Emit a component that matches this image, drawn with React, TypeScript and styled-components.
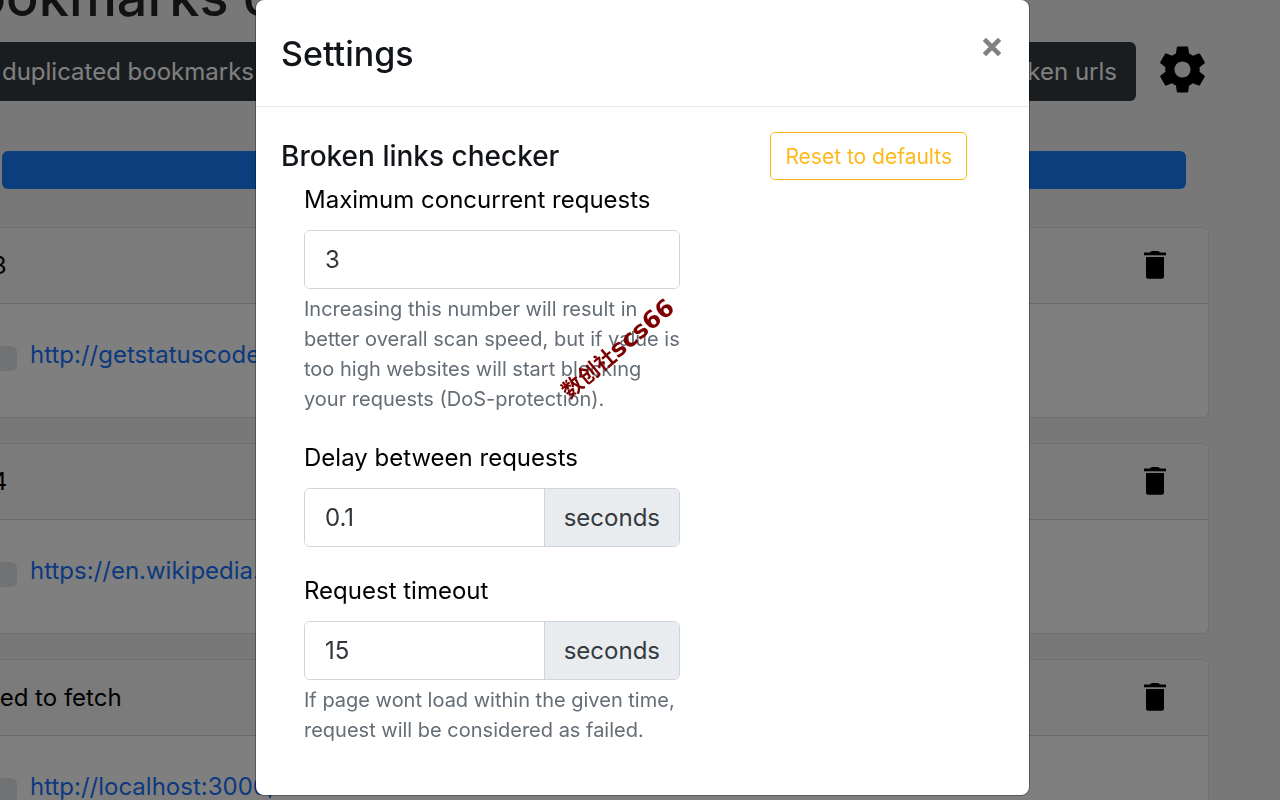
import React, { useState } from "react";
import styled, { createGlobalStyle } from "styled-components";

const GlobalStyle = createGlobalStyle`
  *, *::before, *::after { box-sizing: border-box; }
  html, body, #root { height: 100%; }
  body {
    margin: 0;
    overflow: hidden;
    background: #f0f0f0;
    color: #000;
    font-family: Inter, "Noto Sans CJK SC", sans-serif;
    font-size: 24px;
    line-height: 38px;
  }
  button, input { font: inherit; margin: 0; }
`;

const Viewport = styled.div`
  height: 100%;
  overflow: hidden;
`;

const Page = styled.main`
  margin: -35px 71px 0 -64px;
`;

const PageTitle = styled.h1`
  margin: 0 0 13px;
  padding-left: 2px;
  font-size: 54px;
  font-weight: 500;
  line-height: 64px;
  color: #212529;
`;

const Toolbar = styled.div`
  display: flex;
  align-items: center;
  gap: 19px;
`;

const ToolbarGroup = styled.div`
  display: flex;
  flex: 1;
  justify-content: space-between;
  height: 59px;
  border-radius: 6px;
  background: #343a40;
`;

const ToolbarButton = styled.button`
  padding: 0 19px 0 31px;
  border: 0;
  background: none;
  color: #fff;
`;

const IconButton = styled.button`
  display: flex;
  align-items: center;
  justify-content: center;
  padding: 0;
  border: 0;
  background: none;
  color: inherit;
`;

const SettingsButton = styled(IconButton)`
  height: 59px;
  padding-bottom: 4px;
  margin-right: -1px;
`;

const Progress = styled.div`
  height: 38px;
  margin: 50px 23px 38px 66px;
  border-radius: 6px;
  background: #187af8;
`;

const Card = styled.section`
  margin-bottom: 25px;
  border: 1px solid #dfdfdf;
  border-radius: 6px;
  background: #fff;
`;

const CardHeader = styled.header`
  display: flex;
  align-items: center;
  justify-content: space-between;
  height: 76px;
  padding: 0 42px 0 24px;
  border-bottom: 1px solid #d4d4d4;
  border-radius: 6px 6px 0 0;
  background: #f7f7f7;
`;

const CardTitle = styled.h2`
  margin: 0;
  font-size: 24px;
  font-weight: 400;
`;

const CardBody = styled.div`
  display: flex;
  align-items: flex-start;
  gap: 13px;
  height: 113px;
  padding: 32px 24px;
`;

const Badge = styled.span`
  width: 56px;
  height: 25px;
  margin-top: 10px;
  border-radius: 6px;
  background: #e2e5e8;
`;

const Link = styled.a`
  color: #1673fb;
  text-decoration: none;
`;

const Backdrop = styled.div`
  position: fixed;
  inset: 0;
  padding: 0 16px 4px 20%;
  background: rgba(0, 0, 0, 0.5);
`;

const Dialog = styled.div`
  max-width: 773px;
  border-radius: 8px;
  background: #fff;
  box-shadow: 0 0 0 1px rgba(0, 0, 0, 0.3);
`;

const DialogHeader = styled.header`
  display: flex;
  justify-content: space-between;
  align-items: flex-start;
  height: 107px;
  padding: 31px 25px;
  border-bottom: 1px solid #e6eaee;
`;

const DialogTitle = styled.h2`
  margin: 0;
  font-size: 34px;
  font-weight: 500;
  line-height: 46px;
  color: #111519;
`;

const CloseButton = styled(IconButton)`
  width: 24px;
  height: 32px;
  color: #808080;
`;

const DialogBody = styled.form`
  display: flex;
  align-items: flex-start;
  justify-content: space-between;
  padding: 25px 62px 50px 25px;
`;

const SectionTitle = styled.h3`
  margin: 0;
  font-size: 28px;
  font-weight: 500;
  line-height: 49px;
  color: #111519;
`;

const Fields = styled.div`
  display: flex;
  flex-direction: column;
  gap: 25px;
  width: 399px;
  padding-left: 23px;
`;

const Label = styled.label`
  display: block;
  margin-bottom: 11px;
`;

const InputGroup = styled.div`
  display: flex;
  height: 59px;
  border: 1px solid #ced4da;
  border-radius: 6px;
  overflow: hidden;
`;

const TextInput = styled.input`
  flex: 1;
  min-width: 0;
  padding: 0 20px;
  border: 0;
  background: #fff;
  color: #30363c;
  outline: none;
`;

const Unit = styled.span`
  display: flex;
  align-items: center;
  padding: 0 19px;
  border-left: 1px solid #ced4da;
  background: #e9ecef;
  color: #343a40;
`;

const Help = styled.p`
  margin: 5px 0 0;
  font-size: 20px;
  line-height: 30px;
  color: #646d75;
  white-space: pre-line;
`;

const ResetButton = styled.button`
  height: 48px;
  padding: 2px 14px 0;
  border: 1px solid #ffb81c;
  border-radius: 5px;
  background: #fff;
  color: #ffb81c;
  font-size: 21px;
`;

const Watermark = styled.div`
  position: fixed;
  left: 618px;
  top: 349px;
  display: flex;
  align-items: baseline;
  transform: translate(-50%, -50%) rotate(-40deg);
  color: #7d0000;
  font-family: "DejaVu Sans", "Noto Sans CJK SC", sans-serif;
  font-size: 21px;
  font-weight: 700;
  line-height: 24px;
  white-space: nowrap;
  pointer-events: none;
`;

const WatermarkCode = styled.span`
  font-size: 24px;
`;

const GearIcon = () => (
  <svg width="55" height="55" viewBox="0 0 24 24" fill="currentColor" aria-hidden="true">
    <path d="M19.43 12.98c.04-.32.07-.64.07-.98s-.03-.66-.07-.98l2.11-1.65c.19-.15.24-.42.12-.64l-2-3.46c-.12-.22-.39-.3-.61-.22l-2.49 1c-.52-.4-1.08-.73-1.69-.98l-.38-2.65C14.46 2.18 14.25 2 14 2h-4c-.25 0-.46.18-.49.42l-.38 2.65c-.61.25-1.17.59-1.69.98l-2.49-1c-.23-.09-.49 0-.61.22l-2 3.46c-.13.22-.07.49.12.64l2.11 1.65c-.04.32-.07.65-.07.98s.03.66.07.98l-2.11 1.65c-.19.15-.24.42-.12.64l2 3.46c.12.22.39.3.61.22l2.49-1c.52.4 1.08.73 1.69.98l.38 2.65c.03.24.24.42.49.42h4c.25 0 .46-.18.49-.42l.38-2.65c.61-.25 1.17-.59 1.69-.98l2.49 1c.23.09.49 0 .61-.22l2-3.46c.12-.22.07-.49-.12-.64l-2.11-1.65zM12 15.5c-1.93 0-3.5-1.57-3.5-3.5s1.57-3.5 3.5-3.5 3.5 1.57 3.5 3.5-1.57 3.5-3.5 3.5z" />
  </svg>
);

const TrashIcon = () => (
  <svg width="22" height="29" viewBox="0 0 22 29" fill="currentColor" aria-hidden="true">
    <path d="M0 2.2Q0 1.600 .6 1.600H5.4Q6.400 1.400 6.800 .7Q7.200 0 8 0H14Q14.800 0 15.200 .7Q15.600 1.400 16.600 1.600H21.400Q22 1.600 22 2.200V4.200H0Z" />
    <path d="M2 6H20V25.800Q20 27.800 18 27.800H4Q2 27.800 2 25.800Z" />
  </svg>
);

const CloseIcon = () => (
  <svg width="20" height="20" viewBox="0 0 20 20" fill="none" stroke="currentColor" strokeWidth="4.600" aria-hidden="true">
    <path d="M2.400 2.400L17.600 17.600M17.600 2.400L2.400 17.600" />
  </svg>
);

const results = [
  { title: "403", url: "http://getstatuscode.com/403" },
  { title: "404", url: "https://en.wikipedia.org/wiki/404" },
  { title: "Failed to fetch", url: "http://localhost:3000/" },
];

type FieldProps = {
  id: string;
  label: string;
  initial: string;
  unit?: string;
  help?: string;
};

function Field({ id, label, initial, unit, help }: FieldProps) {
  const [value, setValue] = useState(initial);
  return (
    <div>
      <Label htmlFor={id}>{label}</Label>
      <InputGroup>
        <TextInput id={id} value={value} onChange={(e) => setValue(e.target.value)} />
        {unit && <Unit>{unit}</Unit>}
      </InputGroup>
      {help && <Help>{help}</Help>}
    </div>
  );
}

export default function App() {
  return (
    <Viewport>
      <GlobalStyle />
      <Page>
        <PageTitle>Bookmarks cleaner</PageTitle>
        <Toolbar>
          <ToolbarGroup>
            <ToolbarButton>All duplicated bookmarks</ToolbarButton>
            <ToolbarButton>Broken urls</ToolbarButton>
          </ToolbarGroup>
          <SettingsButton aria-label="Settings">
            <GearIcon />
          </SettingsButton>
        </Toolbar>
        <Progress />
        {results.map((r) => (
          <Card key={r.title}>
            <CardHeader>
              <CardTitle>{r.title}</CardTitle>
              <IconButton aria-label="Delete">
                <TrashIcon />
              </IconButton>
            </CardHeader>
            <CardBody>
              <Badge />
              <Link href={r.url}>{r.url}</Link>
            </CardBody>
          </Card>
        ))}
      </Page>
      <Backdrop>
        <Dialog role="dialog" aria-labelledby="settings-title">
          <DialogHeader>
            <DialogTitle id="settings-title">Settings</DialogTitle>
            <CloseButton aria-label="Close">
              <CloseIcon />
            </CloseButton>
          </DialogHeader>
          <DialogBody onSubmit={(e) => e.preventDefault()}>
            <div>
              <SectionTitle>Broken links checker</SectionTitle>
              <Fields>
                <Field
                  id="max-requests"
                  label="Maximum concurrent requests"
                  initial="3"
                  help={"Increasing this number will result in\nbetter overall scan speed, but if value is\ntoo high websites will start blocking\nyour requests (DoS-protection)."}
                />
                <Field id="delay" label="Delay between requests" initial="0.1" unit="seconds" />
                <Field
                  id="timeout"
                  label="Request timeout"
                  initial="15"
                  unit="seconds"
                  help={"If page wont load within the given time,\nrequest will be considered as failed."}
                />
              </Fields>
            </div>
            <ResetButton type="button">Reset to defaults</ResetButton>
          </DialogBody>
        </Dialog>
      </Backdrop>
      <Watermark>
        数创社<WatermarkCode>scs66</WatermarkCode>
      </Watermark>
    </Viewport>
  );
}
